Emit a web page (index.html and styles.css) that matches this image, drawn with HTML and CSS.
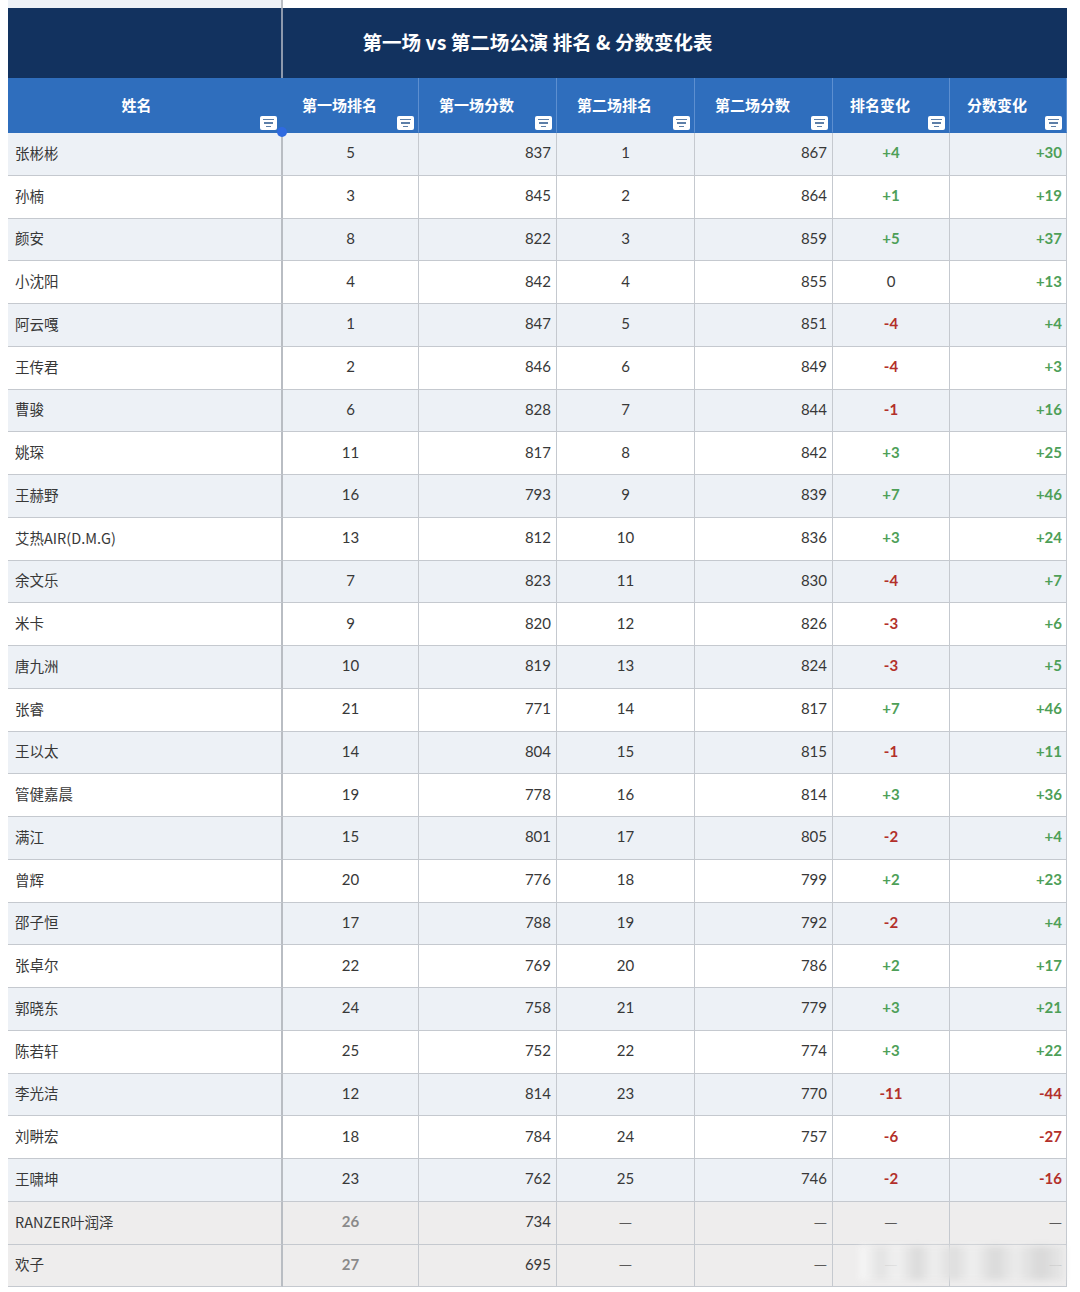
FILE: index.html
```html
<!DOCTYPE html>
<html lang="zh">
<head>
<meta charset="utf-8">
<link rel="stylesheet" href="styles.css">
</head>
<body>
<div class="sheet">
  <div class="topstrip"><div class="ts-name"></div><div class="ts-rest"></div></div>
  <div class="title">
    <div class="title-text">第一场 vs 第二场公演 排名 &amp; 分数变化表</div>
    <div class="title-div"></div>
  </div>
  <div class="row head">
    <div class="c name">姓名<span class="flt"><i></i><i></i><i></i></span><span class="dot"></span></div>
    <div class="c">第一场排名<span class="flt"><i></i><i></i><i></i></span></div>
    <div class="c">第一场分数<span class="flt"><i></i><i></i><i></i></span></div>
    <div class="c">第二场排名<span class="flt"><i></i><i></i><i></i></span></div>
    <div class="c">第二场分数<span class="flt"><i></i><i></i><i></i></span></div>
    <div class="c">排名变化<span class="flt"><i></i><i></i><i></i></span></div>
    <div class="c">分数变化<span class="flt"><i></i><i></i><i></i></span></div>
  </div>
  <div id="body"></div>
  <div class="wm"></div>
</div>
<script>
var data = [
["张彬彬",5,837,1,867,"+4","+30"],
["孙楠",3,845,2,864,"+1","+19"],
["颜安",8,822,3,859,"+5","+37"],
["小沈阳",4,842,4,855,"0","+13"],
["阿云嘎",1,847,5,851,"-4","+4"],
["王传君",2,846,6,849,"-4","+3"],
["曹骏",6,828,7,844,"-1","+16"],
["姚琛",11,817,8,842,"+3","+25"],
["王赫野",16,793,9,839,"+7","+46"],
["艾热AIR(D.M.G)",13,812,10,836,"+3","+24"],
["余文乐",7,823,11,830,"-4","+7"],
["米卡",9,820,12,826,"-3","+6"],
["唐九洲",10,819,13,824,"-3","+5"],
["张睿",21,771,14,817,"+7","+46"],
["王以太",14,804,15,815,"-1","+11"],
["管健嘉晨",19,778,16,814,"+3","+36"],
["满江",15,801,17,805,"-2","+4"],
["曾辉",20,776,18,799,"+2","+23"],
["邵子恒",17,788,19,792,"-2","+4"],
["张卓尔",22,769,20,786,"+2","+17"],
["郭晓东",24,758,21,779,"+3","+21"],
["陈若轩",25,752,22,774,"+3","+22"],
["李光洁",12,814,23,770,"-11","-44"],
["刘畊宏",18,784,24,757,"-6","-27"],
["王啸坤",23,762,25,746,"-2","-16"],
["RANZER叶润泽",26,734,"—","—","—","—"],
["欢子",27,695,"—","—","—","—"]
];
function cls(v){ v=String(v); if(v.charAt(0)=="+") return " pos"; if(v.charAt(0)=="-") return " neg"; if(v=="—") return " dash"; return " zero"; }
function dc(v){ return String(v)=="—" ? " dash" : ""; }
var html = "";
data.forEach(function(r,i){
  var out = r[3]=="—";
  var rc = out ? "row out" : (i%2==0 ? "row alt" : "row");
  html += '<div class="'+rc+'">'+
    '<div class="c name">'+r[0]+'</div>'+
    '<div class="c ctr'+(out?' grey':'')+'">'+r[1]+'</div>'+
    '<div class="c rt">'+r[2]+'</div>'+
    '<div class="c ctr'+dc(r[3])+'">'+r[3]+'</div>'+
    '<div class="c rt'+dc(r[4])+'">'+r[4]+'</div>'+
    '<div class="c ctr chg'+cls(r[5])+'">'+r[5]+'</div>'+
    '<div class="c rt chg'+cls(r[6])+'">'+r[6]+'</div>'+
  '</div>';
});
document.getElementById("body").innerHTML = html;
</script>
</body>
</html>
```
FILE: styles.css
```css
* { box-sizing: border-box; }
html, body { margin: 0; padding: 0; background: #fff; }
body {
  font-family: Lato, "Noto Sans CJK SC", sans-serif;
  color: #383838;
  width: 1080px;
  height: 1292px;
  overflow: hidden;
}
.sheet {
  position: relative;
  margin-left: 8px;
  width: 1059px;
}
.topstrip {
  display: flex;
  height: 8px;
}
.ts-name {
  width: 275px;
  background: #edf1f6;
  border-right: 2px solid #b9bdc3;
}
.ts-rest { flex: 1; }
.title {
  position: relative;
  height: 70px;
  background: #12325f;
  display: flex;
  align-items: center;
  justify-content: center;
  padding-bottom: 3px;
}
.title-text {
  color: #fff;
  font-family: "Noto Sans CJK SC", sans-serif;
  font-weight: 700;
  font-size: 19.5px;
}
.title-div {
  position: absolute;
  left: 273px;
  top: 0;
  bottom: 0;
  width: 2px;
  background: #8d99ad;
}
.row {
  display: grid;
  grid-template-columns: 275px 136px 138px 138px 138px 117px 117px;
  height: 42.75px;
  background: #fff;
}
.row.alt { background: #edf1f6; }
.row.out { background: #eeeded; }
.c {
  position: relative;
  border-right: 1px solid #c5c9cf;
  border-bottom: 1px solid #c5c9cf;
  font-size: 15px;
  display: flex;
  align-items: center;
  white-space: nowrap;
  padding-bottom: 3px;
}
.c.name {
  padding-left: 7px;
  border-right: 2px solid #b9bdc3;
  font-family: "Noto Sans CJK SC", sans-serif;
  font-size: 14.5px;
  font-weight: 400;
}
.c.ctr { justify-content: center; }
.c.rt { justify-content: flex-end; padding-right: 5px; }
.c.grey { color: #8a8a8a; font-weight: 700; }
.c.dash {
  font-family: "Noto Sans CJK SC", sans-serif;
  font-weight: 300;
  font-size: 15px;
}
.chg { font-weight: 700; }
.chg.pos { color: #4e9f58; }
.chg.neg { color: #b3302a; }
.chg.zero { color: #383838; font-weight: 400; }
.chg.dash { color: #383838; font-weight: 300; }
.c.rt.chg { padding-right: 4px; }
.head {
  height: 55px;
  background: #2f6ebd;
}
.head .c {
  justify-content: center;
  color: #fff;
  font-family: "Noto Sans CJK SC", sans-serif;
  font-weight: 700;
  font-size: 15px;
  padding: 0 22px 2px 0;
  border-right: 1px solid #5d8fd0;
  border-bottom: 1px solid #2f6ebd;
}
.head .c.name {
  border-right: 2px solid #2f6ebd;
  font-weight: 700;
  font-size: 15px;
  padding-left: 0;
  padding-right: 16px;
}
.flt {
  position: absolute;
  right: 4px;
  bottom: 2px;
  width: 17px;
  height: 14px;
  background: #fff;
  border-radius: 2px;
  display: flex;
  flex-direction: column;
  align-items: center;
  justify-content: center;
  gap: 2px;
}
.flt i {
  display: block;
  height: 1.5px;
  background: #5d7fa8;
  width: 11px;
}
.flt i:nth-child(2) { width: 9px; }
.flt i:nth-child(3) { width: 5px; }
.dot {
  position: absolute;
  right: -6px;
  bottom: -5px;
  width: 10px;
  height: 10px;
  border-radius: 50%;
  background: #2f6ae0;
  z-index: 2;
}
.wm {
  position: absolute;
  left: 852px;
  top: 1246px;
  width: 205px;
  height: 34px;
  background: linear-gradient(90deg, #fafafa 0%, #e2e2e2 10%, #f2f2f2 18%, #d9d9d9 28%, #efefef 36%, #dcdcdc 46%, #f0f0f0 55%, #d8d8d8 66%, #ececec 76%, #d6d6d6 88%, #e8e8e8 100%);
  filter: blur(3px);
  opacity: 0.9;
}
```
